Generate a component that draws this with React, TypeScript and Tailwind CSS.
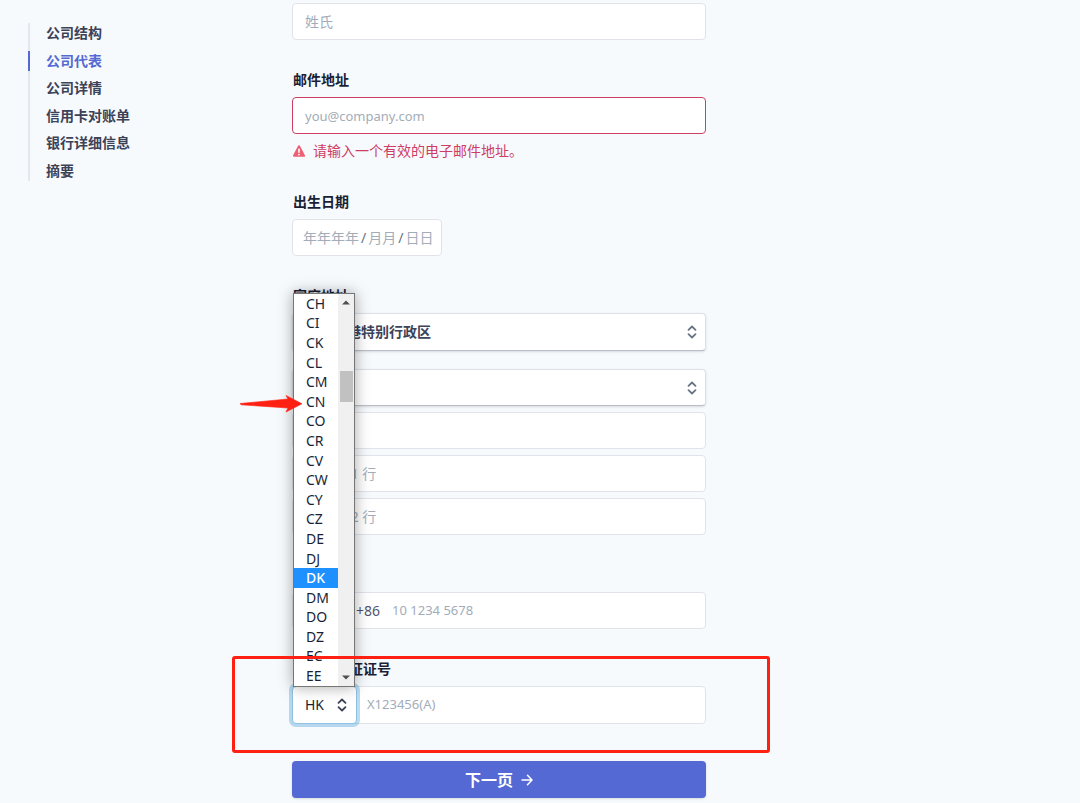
import React, { useState } from 'react'

const steps = ['公司结构', '公司代表', '公司详情', '信用卡对账单', '银行详细信息', '摘要']

const countryCodes = [
    'CH', 'CI', 'CK', 'CL', 'CM', 'CN', 'CO', 'CR', 'CV', 'CW',
    'CY', 'CZ', 'DE', 'DJ', 'DK', 'DM', 'DO', 'DZ', 'EC', 'EE',
]

const inputClass =
    'block h-[37px] w-full rounded border bg-white px-3 text-[#3c4257] placeholder:text-[#a3acb9] outline-none'

const SortIcon = ({ className }: { className?: string }) => (
    <svg className={className} width="10" height="14" viewBox="0 0 10 14" fill="none" stroke="currentColor" strokeWidth="1.800" strokeLinecap="round" strokeLinejoin="round">
        <path d="M1.500 4.800 5 1.500 8.500 4.800" />
        <path d="M1.500 9.200 5 12.500 8.500 9.200" />
    </svg>
)

const Label = ({ htmlFor, children }: { htmlFor: string; children: React.ReactNode }) => (
    <label htmlFor={htmlFor} className="mb-[7px] block pl-px text-sm leading-5 font-bold text-[#1a1f36]">
        {children}
    </label>
)

interface SelectFieldProps {
    id: string
    label?: string
    className: string
    options: string[]
}

const SelectField = ({ id, label, className, options }: SelectFieldProps) => (
    <div className={`relative ${className}`}>
        <select
            id={id}
            aria-label={label}
            className="h-full w-full appearance-none rounded border border-[#dde1e7] border-b-[#b9bec8] bg-white px-3 text-sm font-bold text-[#3c4257] shadow-sm outline-none"
        >
            {options.map((option) => <option key={option}>{option}</option>)}
        </select>
        <SortIcon className="pointer-events-none absolute top-1/2 right-[9px] -translate-y-1/2 text-[#697386]" />
    </div>
)

const StepNav = () => (
    <nav className="flex h-[158px] flex-col justify-between text-sm leading-5 font-bold text-[#3c4257]">
        {steps.map((step) => {
            const active = step === '公司代表'
            return (
                <a
                    key={step}
                    href="#"
                    aria-current={active ? 'step' : undefined}
                    className={active ? 'relative z-10 -ml-[2px] border-l-2 border-[#5469d4] pl-4 text-[#5469d4]' : 'pl-4'}
                >
                    {step}
                </a>
            )
        })}
    </nav>
)

interface CountryListProps {
    value: string
    onPick: (code: string) => void
}

const CountryList = ({ value, onPick }: CountryListProps) => (
    <div className="absolute bottom-full left-px z-10 -mb-px flex h-[394px] w-[62px] border border-[#767676] bg-white shadow-[0_0_14px_rgba(0,0,0,0.35)]">
        <div role="listbox" aria-label="国家代码" className="flex flex-1 flex-col">
            {countryCodes.map((code) => (
                <button
                    key={code}
                    type="button"
                    role="option"
                    aria-selected={code === value}
                    onClick={() => onPick(code)}
                    className={`flex min-h-0 flex-1 items-center pl-3 text-left text-sm leading-none ${code === value ? 'bg-[#1e90ff] font-medium text-white' : 'text-[#1a1f36]'}`}
                >
                    {code}
                </button>
            ))}
        </div>
        {/* Scrollbar */}
        <div className="flex w-4 flex-col items-center bg-[#f0f0f0]">
            <svg className="mt-1.5" width="8" height="5" viewBox="0 0 8 5" fill="#505050"><path d="M0 4.500 4 .5 8 4.500Z" /></svg>
            <div className="mt-[66px] h-[31px] w-[13px] bg-[#c1c1c1]" />
            <svg className="mt-auto mb-1.5" width="8" height="5" viewBox="0 0 8 5" fill="#505050"><path d="M0 .5 4 4.500 8 .5Z" /></svg>
        </div>
        {/* Pointer to CN */}
        <svg className="absolute top-[101px] -left-[54px]" width="63" height="18" viewBox="0 0 63 18" fill="#ff2014">
            <path d="M0 8.500 48 4 46 .5 62 8.800 46 17 48 13 1 9.800Z" stroke="#ff2014" strokeWidth=".6" strokeLinejoin="round" />
        </svg>
    </div>
)

const App = () => {
    const [country, setCountry] = useState('DK')

    return (
        <div className="flex min-h-screen bg-[#f7fafc] font-['Noto_Sans','Noto_Sans_CJK_SC',sans-serif]">
            <aside className="w-[292px] shrink-0 pt-[23px] pl-7">
                <div className="border-l-2 border-[#e3e8ee]">
                    <StepNav />
                </div>
            </aside>

            <form className="flex max-w-[414px] flex-1 flex-col gap-[30px] pt-[3px] pb-[5px]" onSubmit={(e) => e.preventDefault()}>
                <input aria-label="姓氏" placeholder="姓氏" className={`${inputClass} border-[#e0e4ea] text-sm`} />

                <div>
                    <Label htmlFor="email">邮件地址</Label>
                    <input id="email" type="email" placeholder="you@company.com" className={`${inputClass} border-[#cd3d64] text-[13px]`} />
                    <p className="mt-[7px] mb-px flex items-center gap-2 pl-px text-sm leading-5 text-[#cd3d64]">
                        <svg width="12" height="12" viewBox="0 0 12 12">
                            <path d="M6 1.200 11 10.800H1Z" fill="#ed5f74" stroke="#ed5f74" strokeWidth="2" strokeLinejoin="round" />
                            <path d="M6 4.200v3" stroke="#fff" strokeWidth="1.600" strokeLinecap="round" />
                            <circle cx="6" cy="9.600" r=".9" fill="#fff" />
                        </svg>
                        请输入一个有效的电子邮件地址。
                    </p>
                </div>

                <div>
                    <Label htmlFor="birth-year">出生日期</Label>
                    <div className="flex h-[37px] w-[150px] items-center gap-0.5 rounded border border-[#e0e4ea] bg-white px-[10px] text-sm text-[#697386]">
                        <input id="birth-year" placeholder="年年年年" className="w-14 outline-none placeholder:text-[#a3acb9]" />
                        /
                        <input aria-label="月" placeholder="月月" className="w-7 outline-none placeholder:text-[#a3acb9]" />
                        /
                        <input aria-label="日" placeholder="日日" className="w-7 outline-none placeholder:text-[#a3acb9]" />
                    </div>
                </div>

                <div>
                    <Label htmlFor="region">家庭地址</Label>
                    <SelectField id="region" className="mb-[18px] h-[38px]" options={['中国香港特别行政区']} />
                    <div className="flex flex-col gap-1.5">
                        <SelectField id="district" label="地区" className="h-[37px]" options={['']} />
                        <input aria-label="城市" className={`${inputClass} border-[#e0e4ea] text-sm`} />
                        <input aria-label="地址第 1 行" placeholder="地址第 1 行" className={`${inputClass} border-[#e0e4ea] text-sm`} />
                        <input aria-label="地址第 2 行" placeholder="地址第 2 行" className={`${inputClass} border-[#e0e4ea] text-sm`} />
                    </div>
                </div>

                <div className="mt-[27px] flex h-[37px] items-center rounded border border-[#e0e4ea] bg-white pl-[63px] text-sm text-[#4f566b]">
                    <span>+86</span>
                    <input type="tel" aria-label="电话号码" placeholder="10 1234 5678" className="ml-3 min-w-0 flex-1 text-[13px] outline-none placeholder:text-[#a3acb9]" />
                </div>

                <div className="relative">
                    <Label htmlFor="id-number">香港身份证证号</Label>
                    <div className="flex h-[38px] rounded border border-[#e0e4ea] bg-white">
                        <div className="relative -m-px w-[65px] shrink-0">
                            <select
                                aria-label="签发地区"
                                className="h-full w-full appearance-none rounded border border-[#8fc1e3] bg-white px-3 text-sm text-[#1a1f36] ring-3 ring-[#3a97d4]/35 outline-none"
                            >
                                <option>HK</option>
                            </select>
                            <SortIcon className="pointer-events-none absolute top-1/2 right-[10px] -translate-y-1/2 text-[#3c4257]" />
                            <CountryList value={country} onPick={setCountry} />
                        </div>
                        <input id="id-number" placeholder="X123456(A)" className="min-w-0 flex-1 px-[11px] text-[13px] outline-none placeholder:text-[#a3acb9]" />
                    </div>
                    {/* Highlight around the ID field */}
                    <div className="pointer-events-none absolute -top-[3px] -right-16 -left-[60px] z-20 h-[97px] rounded-[3px] border-3 border-[#ff2014]" />
                </div>

                <button type="submit" className="mt-[7px] flex h-[37px] items-center justify-center gap-2 rounded bg-[#5469d4] text-base font-bold text-white shadow-sm">
                    下一页
                    <svg width="12" height="12" viewBox="0 0 12 12" fill="none" stroke="currentColor" strokeWidth="1.500" strokeLinecap="round" strokeLinejoin="round">
                        <path d="M1 6h10M6.500 1.200 11 6l-4.500 4.800" />
                    </svg>
                </button>
            </form>
        </div>
    )
}

export default App
